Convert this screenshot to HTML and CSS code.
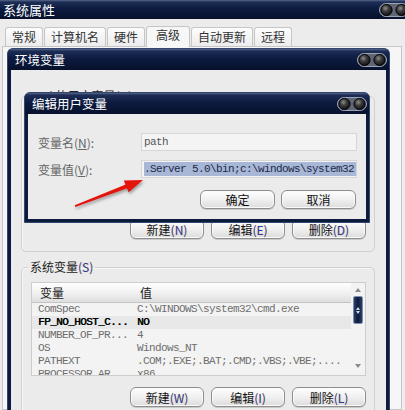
FILE: index.html
```html
<!DOCTYPE html>
<html lang="zh-CN">
<head>
    <meta charset="UTF-8">
    <title>系统属性</title>
    <link rel="stylesheet" href="styles.css">
</head>
<body>

    <!-- shared caption buttons -->
    <svg class="defs" width="0" height="0">
        <defs>
            <radialGradient id="ball" cx="40%" cy="35%" r="65%">
                <stop offset="0" stop-color="#8c8c8c"/>
                <stop offset="0.45" stop-color="#3c3c3c"/>
                <stop offset="1" stop-color="#101010"/>
            </radialGradient>
            <symbol id="caption-btns" viewBox="0 0 30 14">
                <rect x="0.5" y="0.5" width="29" height="13" rx="6.5" fill="#5f6675" stroke="#9aa3b4"/>
                <circle cx="7.5" cy="7" r="5.6" fill="url(#ball)" stroke="#050505"/>
                <circle cx="22.5" cy="7" r="5.6" fill="url(#ball)" stroke="#050505"/>
            </symbol>
        </defs>
    </svg>

    <div class="sys-window">
        <div class="titlebar">
            <span class="title">系统属性</span>
            <svg class="caption caption-outer" viewBox="0 0 30 14"><use href="#caption-btns"/></svg>
        </div>
        <div class="tabs">
            <div class="tab">常规</div>
            <div class="tab">计算机名</div>
            <div class="tab">硬件</div>
            <div class="tab active">高级</div>
            <div class="tab">自动更新</div>
            <div class="tab">远程</div>
        </div>
        <div class="tab-panel"></div>
    </div>

    <div class="window env-window">
        <div class="titlebar">
            <span class="title">环境变量</span>
            <svg class="caption" viewBox="0 0 30 14"><use href="#caption-btns"/></svg>
        </div>
        <div class="win-body">
            <fieldset class="group">
                <legend>zwd 的用户变量<span class="key">(U)</span></legend>
                <div class="list list-user"></div>
                <div class="btn-row">
                    <button class="btn">新建<span class="key">(N)</span></button>
                    <button class="btn">编辑<span class="key">(E)</span></button>
                    <button class="btn">删除<span class="key">(D)</span></button>
                </div>
            </fieldset>

            <fieldset class="group group-sys">
                <legend>系统变量<span class="key">(S)</span></legend>
                <div class="list">
                    <div class="list-main">
                        <div class="list-head">
                            <span class="head-name">变量</span>
                            <span class="head-val">值</span>
                        </div>
                        <div class="row"><span class="col-name">ComSpec</span><span class="col-val">C:\WINDOWS\system32\cmd.exe</span></div>
                        <div class="row hot"><span class="col-name">FP_NO_HOST_C...</span><span class="col-val">NO</span></div>
                        <div class="row"><span class="col-name">NUMBER_OF_PR...</span><span class="col-val">4</span></div>
                        <div class="row"><span class="col-name">OS</span><span class="col-val">Windows_NT</span></div>
                        <div class="row"><span class="col-name">PATHEXT</span><span class="col-val">.COM;.EXE;.BAT;.CMD;.VBS;.VBE;....</span></div>
                        <div class="row"><span class="col-name">PROCESSOR_AR...</span><span class="col-val">x86</span></div>
                    </div>
                    <div class="scrollbar">
                        <div class="sb-arrow"><span class="tri-up"></span></div>
                        <div class="sb-thumb"></div>
                        <div class="sb-track"></div>
                        <div class="sb-arrow"><span class="tri-down"></span></div>
                    </div>
                </div>
                <div class="btn-row">
                    <button class="btn">新建<span class="key">(W)</span></button>
                    <button class="btn">编辑<span class="key">(I)</span></button>
                    <button class="btn">删除<span class="key">(L)</span></button>
                </div>
            </fieldset>
        </div>
    </div>

    <div class="window edit-dialog">
        <div class="titlebar">
            <span class="title">编辑用户变量</span>
            <svg class="caption" viewBox="0 0 30 14"><use href="#caption-btns"/></svg>
        </div>
        <div class="win-body dialog-body">
            <div class="field">
                <label class="field-label">变量名(<u>N</u>):</label>
                <div class="input">path</div>
            </div>
            <div class="field">
                <label class="field-label">变量值(<u>V</u>):</label>
                <div class="input"><span class="selected">.Server 5.0\bin;c:\windows\system32</span></div>
            </div>
            <div class="btn-row dialog-btns">
                <button class="btn btn-small">确定</button>
                <button class="btn btn-small">取消</button>
            </div>
        </div>
    </div>

    <svg class="arrow" width="405" height="410" viewBox="0 0 405 410">
        <polygon points="74.7,205.3 126.4,184.3 127.8,187.9 75.3,206.9" fill="#e5140c"/>
        <polygon points="143,180 123.8,180.6 128.6,192.2" fill="#e5140c"/>
    </svg>

</body>
</html>
```

FILE: styles.css
```css
* {
    box-sizing: border-box;
}

body {
    margin: 0;
    width: 405px;
    height: 410px;
    overflow: hidden;
    position: relative;
    background-color: #ececec;
    font-family: "Noto Sans CJK SC", "Liberation Sans", sans-serif;
    font-size: 12px;
    color: #222;
}

.defs {
    position: absolute;
}

/* title bars */
.titlebar {
    display: flex;
    align-items: center;
    justify-content: space-between;
    height: 19px;
    padding-left: 3px;
    background: linear-gradient(#56678a 0, #1d2d55 2px, #0d1b40 45%, #07112c 100%);
    color: #fff;
}

.title {
    font-size: 13px;
    line-height: 14px;
}

.caption {
    width: 30px;
    height: 14px;
    flex-shrink: 0;
}

.caption-outer {
    margin-right: -4px;
}

/* outer window */
.sys-window {
    display: flex;
    flex-direction: column;
    height: 410px;
}

.tabs {
    display: flex;
    align-items: flex-end;
    height: 27px;
    padding-left: 5px;
}

.tab {
    height: 19px;
    padding: 0 6px;
    margin-right: 1px;
    border: 1px solid #c6c6c6;
    border-bottom: none;
    border-radius: 3px 3px 0 0;
    background: linear-gradient(#fdfdfd, #ececec);
    line-height: 18px;
    color: #333;
}

.tab.active {
    height: 21px;
    padding: 0 9px;
    margin-bottom: -1px;
    background: #f7f7f7;
    line-height: 16px;
    position: relative;
}

.tab-panel {
    flex: 1;
    margin: 0 3px 0 2px;
    border: 1px solid #c6c6c6;
    background-color: #f6f6f6;
}

/* inner windows */
.window {
    position: absolute;
    display: flex;
    flex-direction: column;
    padding: 0 3px 3px;
    border-radius: 6px 6px 0 0;
    background: #0c1a3e;
    border: 1px solid #33466e;
    border-bottom: none;
}

.window .titlebar {
    margin: 0 -3px;
    padding: 0 2px 0 7px;
    border-radius: 5px 5px 0 0;
}

.env-window {
    left: 7px;
    top: 48px;
    width: 383px;
    height: 380px;
}

.env-window .titlebar {
    height: 21px;
}

.env-window .title {
    font-size: 12.5px;
}

.win-body {
    flex: 1;
    background-color: #ebebeb;
}

/* group boxes */
.group {
    margin: 19px 11px 0 10px;
    padding: 8px 8px 12px 9px;
    border: 1px solid #d0d0d0;
    border-radius: 5px;
    box-shadow: inset 1px 1px 0 #f8f8f8;
    min-width: 0;
}

.group-sys {
    margin-top: 8px;
}

.group legend {
    padding: 0 2px;
    margin-left: -3px;
    font-size: 12px;
    line-height: 14px;
    color: #222;
}

.key {
    color: #1f3fb4;
    text-shadow: 0 0 1px #f2b040;
}

.btn-row {
    display: flex;
    justify-content: flex-end;
    gap: 7px;
    margin-top: 11px;
}

.btn {
    width: 74px;
    height: 20px;
    padding: 0;
    border: 1px solid #8e8e8e;
    border-radius: 6px;
    background: linear-gradient(#fefefe, #f0f0f0 50%, #dcdcdc);
    box-shadow: inset 0 0 0 1px #fbfbfb, 0 1px 0 #c9c9c9;
    font-family: "Noto Sans CJK SC", "Liberation Sans", sans-serif;
    font-size: 12px;
    line-height: 17px;
    color: #111;
}

/* lists */
.list {
    display: flex;
    height: 94px;
    border: 1px solid #cdcdcd;
    background-color: #f3f3f3;
    overflow: hidden;
}

.list-user {
    height: 97px;
}

.list-main {
    flex: 1;
}

.list-head {
    display: flex;
    height: 20px;
    border-bottom: 1px solid #c4c4c4;
    background: linear-gradient(#fefefe, #f2f2f2 50%, #dedede);
    line-height: 19px;
    color: #1a1a1a;
}

.head-name {
    width: 105px;
    padding-left: 8px;
}

.head-val {
    padding-left: 3px;
}

.row {
    display: flex;
    height: 13px;
    font-family: "Liberation Mono", "DejaVu Sans Mono", monospace;
    font-size: 11px;
    letter-spacing: -0.6px;
    line-height: 13px;
    color: #6e6e6e;
    white-space: nowrap;
}

.row.hot {
    background-color: #e8e8e8;
    color: #000;
    text-shadow: 0.4px 0 0 #000;
}

.col-name {
    width: 105px;
    padding-left: 6px;
}

.scrollbar {
    display: flex;
    flex-direction: column;
    align-items: center;
    width: 14px;
}

.sb-arrow {
    display: flex;
    align-items: center;
    justify-content: center;
    height: 13px;
}

.sb-arrow:last-child {
    height: 19px;
}

.tri-up,
.tri-down {
    width: 0;
    height: 0;
    border-left: 3px solid transparent;
    border-right: 3px solid transparent;
}

.tri-up {
    border-bottom: 4px solid #8a8a8a;
}

.tri-down {
    border-top: 4px solid #8a8a8a;
}

.sb-thumb {
    width: 10px;
    height: 28px;
    border: 1px solid #7c8cab;
    border-radius: 2px;
    background: linear-gradient(90deg, #2d3d63, #0d1b40 50%, #2d3d63);
    display: flex;
    flex-direction: column;
    align-items: center;
    justify-content: center;
    gap: 1px;
}

.sb-thumb::before,
.sb-thumb::after {
    content: "";
    border-left: 2px solid transparent;
    border-right: 2px solid transparent;
}

.sb-thumb::before {
    border-bottom: 3px solid #d4dbe8;
}

.sb-thumb::after {
    border-top: 3px solid #d4dbe8;
}

.sb-track {
    flex: 1;
}

/* edit dialog */
.edit-dialog {
    left: 24px;
    top: 92px;
    width: 346px;
    height: 131px;
    border-bottom: 1px solid #33466e;
}

.edit-dialog .titlebar {
    height: 21px;
}

.edit-dialog .title {
    font-size: 12.5px;
}

.dialog-body {
    padding: 19px 9px 0 10px;
}

.field {
    display: flex;
    align-items: center;
    margin-bottom: 9px;
}

.field-label {
    width: 103px;
    color: #666;
    font-size: 12px;
}

.input {
    flex: 1;
    height: 18px;
    padding: 1px 0 0 2px;
    border: 1px solid #d6d6d6;
    background-color: #f4f4f4;
    font-family: "Liberation Mono", "DejaVu Sans Mono", monospace;
    font-size: 11px;
    letter-spacing: -0.6px;
    line-height: 14px;
    color: #555;
    white-space: nowrap;
    overflow: hidden;
}

.selected {
    display: inline-block;
    width: 215px;
    background-color: #a8b7d5;
    color: #1b2a4a;
}

.dialog-btns {
    gap: 6px;
    margin-top: 12px;
    padding-right: 1px;
}

.btn-small {
    width: 75px;
    height: 19px;
    line-height: 16px;
}

/* annotation */
.arrow {
    position: absolute;
    left: 0;
    top: 0;
    pointer-events: none;
    filter: drop-shadow(1px 2px 1.5px rgba(0, 0, 0, 0.35));
}
```
